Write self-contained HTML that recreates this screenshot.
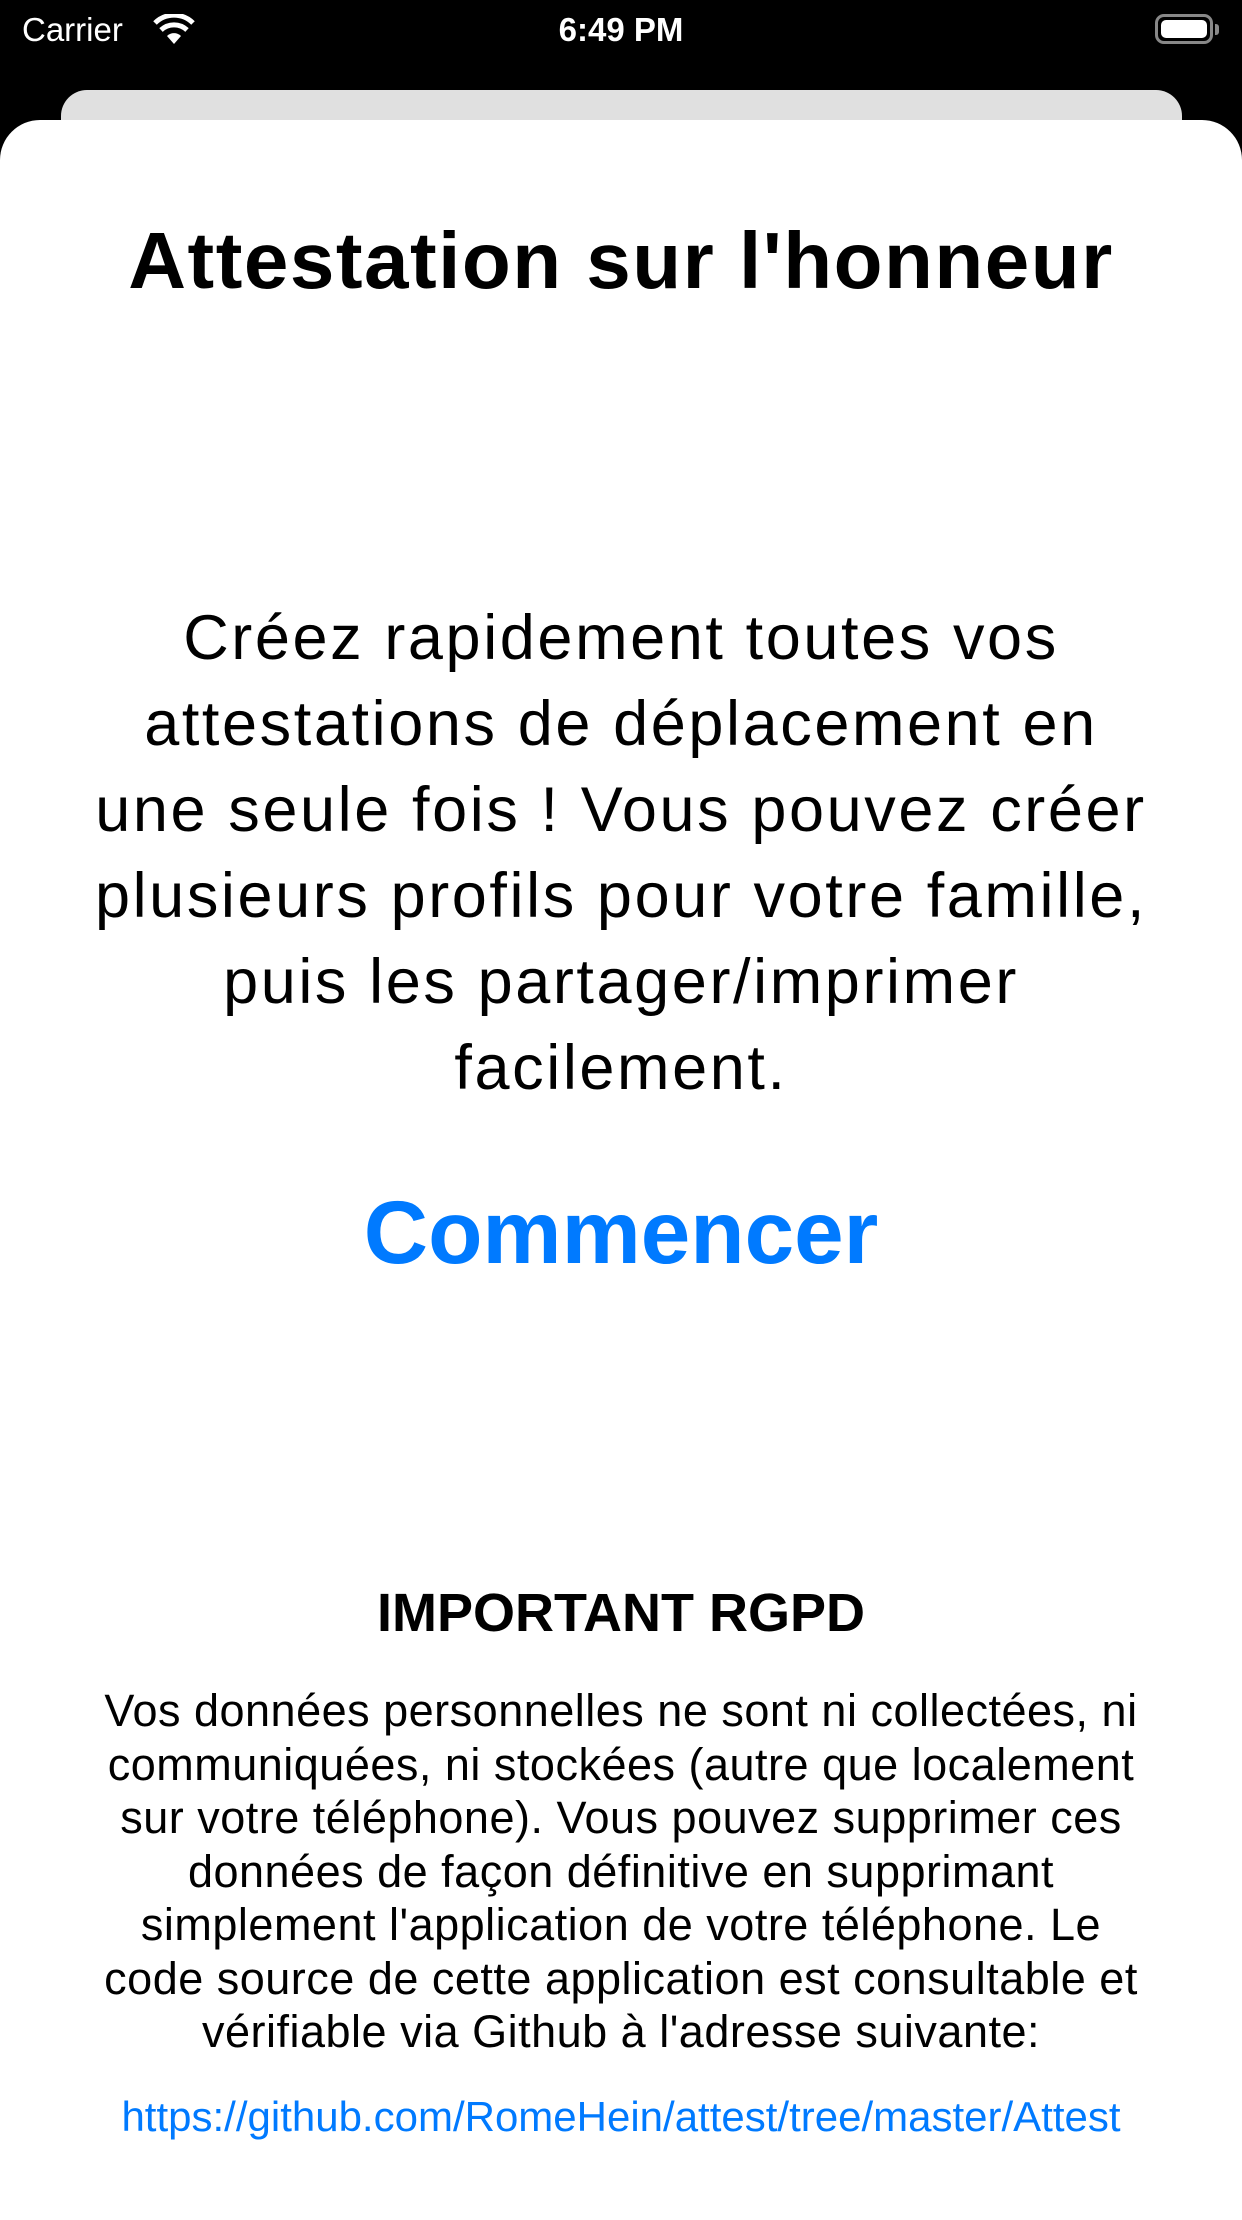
<!DOCTYPE html>
<html><head><meta charset="utf-8"><style>
body{margin:0;width:1242px;height:2208px;background:#000;position:relative;overflow:hidden;font-family:"Liberation Sans",sans-serif}
.sb{position:absolute;color:#fff;font-size:33px;top:11px}
.card{position:absolute;left:61px;top:90px;width:1121px;height:80px;background:#e0e0e0;border-radius:26px 26px 0 0}
.sheet{position:absolute;left:0;top:120px;width:1242px;height:2100px;background:#fff;border-radius:40px 40px 0 0}
.c{position:absolute;left:0;width:1242px;text-align:center;white-space:nowrap}
</style></head><body>
<div class="sb" style="left:22px">Carrier</div>
<svg style="position:absolute;left:152px;top:14px" width="44" height="32" viewBox="0 0 44 32"><path d="M22 30 L15 22 A10 10 0 0 1 29 22 Z" fill="#fff"/><path d="M9 16 A19 19 0 0 1 35 16" stroke="#fff" stroke-width="5" fill="none"/><path d="M3 9 A27 27 0 0 1 41 9" stroke="#fff" stroke-width="5" fill="none"/></svg>
<div class="sb" style="left:0;width:1242px;text-align:center;font-weight:bold;font-size:33px">6:49 PM</div>
<div style="position:absolute;left:1155px;top:14px;width:58px;height:30px;border:3px solid #888;border-radius:9px;box-sizing:border-box"><div style="position:absolute;left:3px;top:3px;right:3px;bottom:3px;background:#fff;border-radius:5px"></div></div>
<div style="position:absolute;left:1215px;top:24px;width:4px;height:11px;background:#888;border-radius:0 3px 3px 0"></div>
<div class="card"></div>
<div class="sheet"></div>
<div class="c" style="top:216px;font-size:80px;font-weight:bold;line-height:90px;letter-spacing:1.5px">Attestation sur l'honneur</div>
<div class="c" style="top:595px;font-size:63px;line-height:86px;letter-spacing:2.6px">Créez rapidement toutes vos<br>attestations de déplacement en<br>une seule fois ! Vous pouvez créer<br>plusieurs profils pour votre famille,<br>puis les partager/imprimer<br>facilement.</div>
<div class="c" style="top:1182px;font-size:89px;font-weight:bold;color:#007aff;line-height:100px">Commencer</div>
<div class="c" style="top:1583px;font-size:54px;font-weight:bold;line-height:60px">IMPORTANT RGPD</div>
<div class="c" style="top:1684px;font-size:45px;line-height:53.5px;letter-spacing:0.5px">Vos données personnelles ne sont ni collectées, ni<br>communiquées, ni stockées (autre que localement<br>sur votre téléphone). Vous pouvez supprimer ces<br>données de façon définitive en supprimant<br>simplement l'application de votre téléphone. Le<br>code source de cette application est consultable et<br>vérifiable via Github à l'adresse suivante:</div>
<div class="c" style="top:2094px;font-size:42px;line-height:46px;color:#007aff">https://github.com/RomeHein/attest/tree/master/Attest</div>
</body></html>
